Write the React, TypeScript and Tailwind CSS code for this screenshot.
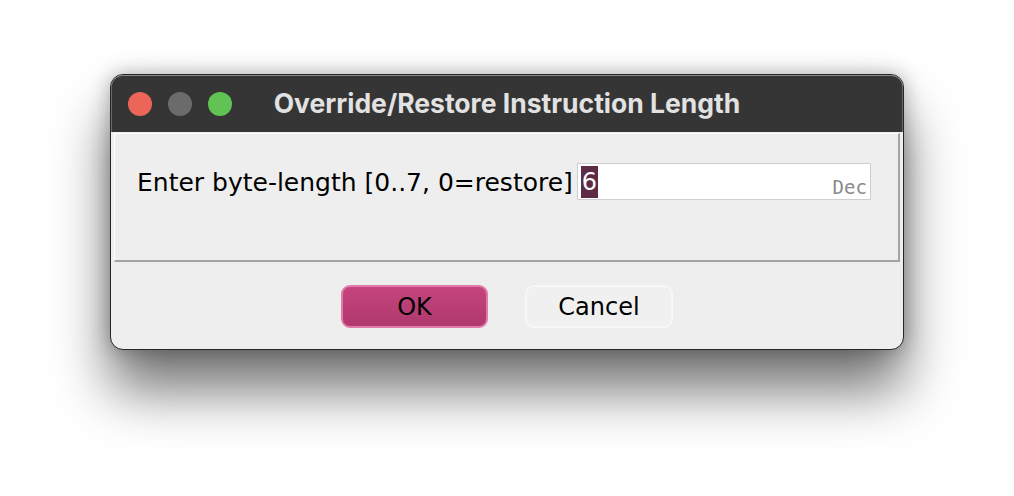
import React from "react";

export default function App() {
  const sans = { fontFamily: '"DejaVu Sans", "Open Sans", sans-serif' };
  return (
    <div className="w-[1014px] h-[496px] bg-white pt-[74px] overflow-hidden" style={sans}>
      <div className="mx-auto w-[794px] h-[276px] rounded-[13px] border border-[#262626] bg-[#eeeeee] shadow-[0_40px_55px_rgba(0,0,0,0.55),0_0_20px_rgba(0,0,0,0.3)] overflow-hidden flex flex-col">
        <div className="h-[57px] bg-[#353535] rounded-t-[12px] shadow-[inset_0_1px_0_#8a8a8a,inset_1px_0_0_#6a6a6a,inset_-1px_0_0_#6a6a6a] relative flex items-center justify-center">
          <div className="absolute left-[17px] top-[17px] flex gap-[16px]">
            <span className="w-[24px] h-[24px] rounded-full bg-[#ec6559]" />
            <span className="w-[24px] h-[24px] rounded-full bg-[#6b6b6b]" />
            <span className="w-[24px] h-[24px] rounded-full bg-[#61c354]" />
          </div>
          <span className="text-[#e2e2e2] text-[26.5px] font-bold" style={{ fontFamily: 'Inter, "Open Sans", sans-serif' }}>
            Override/Restore Instruction Length
          </span>
        </div>
        <div className="mx-[3px] mt-[1px] h-[129px] border-t border-l border-white border-b-2 border-r-2 border-b-[#a4a4a4] border-r-[#a4a4a4] pt-[29px] pl-[22px] flex items-start">
          <span className="text-[25px] text-black leading-[37px] mr-[4px] mt-[1px] whitespace-nowrap">Enter byte‑length [0..7, 0=restore]</span>
          <div className="w-[294px] h-[37px] bg-white border border-[#cfcfcf] flex items-center justify-between pl-[3px] pr-[3px]">
            <span className="bg-[#5e2b47] text-white text-[24px] leading-[32px] h-[32px] px-[1px]">6</span>
            <span className="self-end text-[#8a8a8a] text-[19px] leading-[22px] mb-[1px]" style={{ fontFamily: '"DejaVu Sans Mono", "Liberation Mono", monospace' }}>Dec</span>
          </div>
        </div>
        <div className="flex-1 flex justify-center items-start pt-[23px] gap-[37px]">
          <button className="w-[147px] h-[43px] rounded-[9px] border-2 border-[#e27aa8] bg-gradient-to-b from-[#c5457e] to-[#b0386e] text-black text-[24px]">OK</button>
          <button className="w-[148px] h-[43px] rounded-[9px] border-2 border-[#f7f7f7] bg-[#f0f0f0] text-black text-[24px]">Cancel</button>
        </div>
      </div>
    </div>
  );
}
